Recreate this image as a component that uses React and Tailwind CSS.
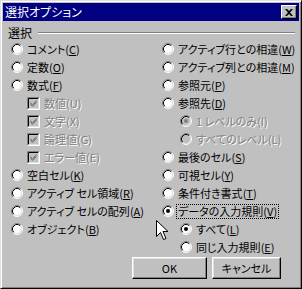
import React from "react";

function Radio({ checked, disabled }) {
  return (
    <svg width="12" height="12" viewBox="0 0 12 12" className="shrink-0">
      <circle cx="6" cy="6" r="5" fill={disabled ? "#c0c0c0" : "#ffffff"} />
      <path d="M2.11 9.89 A5.5 5.5 0 0 1 9.89 2.11" fill="none" stroke="#808080" />
      <path d="M9.89 2.11 A5.5 5.5 0 0 1 2.11 9.89" fill="none" stroke="#ffffff" />
      <path d="M2.82 9.18 A4.5 4.5 0 0 1 9.18 2.82" fill="none" stroke="#000000" />
      <path d="M9.18 2.82 A4.5 4.5 0 0 1 2.82 9.18" fill="none" stroke="#dfdfdf" />
      {checked && <circle cx="6" cy="6" r="2" fill={disabled ? "#808080" : "#000000"} />}
    </svg>
  );
}

function Check() {
  return (
    <svg width="13" height="13" viewBox="0 0 13 13" className="shrink-0">
      <rect x="0" y="0" width="13" height="13" fill="#c0c0c0" />
      <path d="M0.5 12.5 V0.5 H12.5" fill="none" stroke="#808080" />
      <path d="M1.5 11.5 V1.5 H11.5" fill="none" stroke="#000000" />
      <path d="M0.5 12.5 H12.5 V0.5" fill="none" stroke="#ffffff" />
      <path d="M1.5 11.5 H11.5 V1.5" fill="none" stroke="#dfdfdf" />
      <path d="M3.5 5.5 L5.5 7.5 L9.5 3.5 M3.5 6.5 L5.5 8.5 L9.5 4.5 M3.5 7.5 L5.5 9.5 L9.5 5.5" fill="none" stroke="#808080" />
    </svg>
  );
}

function Label({ t, k, disabled }) {
  if (disabled) {
    return (
      <span className="text-[#808080] [text-shadow:1px_1px_0_#ffffff]">
        {t}({k})
      </span>
    );
  }
  return (
    <span>
      {t}(<u className="underline-offset-[1px]">{k}</u>)
    </span>
  );
}

function Row({ t, k, check, radio, checked, disabled, indent, focus }) {
  return (
    <div className={`h-[18px] flex items-center ${indent}`}>
      {check ? <Check /> : <Radio checked={checked} disabled={disabled} />}
      <span
        className={`ml-[3px] leading-[13px] px-[1px] ${
          focus ? "outline-1 outline-dotted outline-black" : ""
        }`}
      >
        <Label t={t} k={k} disabled={disabled} />
      </span>
    </div>
  );
}

const left = [
  { t: "コメント", k: "C" },
  { t: "定数", k: "O" },
  { t: "数式", k: "F" },
  { t: "数値", k: "U", check: true, disabled: true, indent: "pl-[16px]" },
  { t: "文字", k: "X", check: true, disabled: true, indent: "pl-[16px]" },
  { t: "論理値", k: "G", check: true, disabled: true, indent: "pl-[16px]" },
  { t: "エラー値", k: "E", check: true, disabled: true, indent: "pl-[16px]" },
  { t: "空白セル", k: "K" },
  { t: "アクティブ セル領域", k: "R" },
  { t: "アクティブ セルの配列", k: "A" },
  { t: "オブジェクト", k: "B" },
];

const right = [
  { t: "アクティブ行との相違", k: "W" },
  { t: "アクティブ列との相違", k: "M" },
  { t: "参照元", k: "P" },
  { t: "参照先", k: "D" },
  { t: "1 レベルのみ", k: "I", disabled: true, checked: true, indent: "pl-[18px]" },
  { t: "すべてのレベル", k: "L", disabled: true, indent: "pl-[18px]" },
  { t: "最後のセル", k: "S" },
  { t: "可視セル", k: "Y" },
  { t: "条件付き書式", k: "T" },
  { t: "データの入力規則", k: "V", checked: true, focus: true },
  { t: "すべて", k: "L", checked: true, indent: "pl-[18px]" },
  { t: "同じ入力規則", k: "E", indent: "pl-[18px]" },
];

function Button({ children, w }) {
  return (
    <div
      className={`${w} h-[22px] flex items-center justify-center bg-[#c0c0c0] border border-t-white border-l-white border-r-black border-b-black shadow-[inset_-1px_-1px_#808080,inset_1px_1px_#dfdfdf]`}
    >
      {children}
    </div>
  );
}

export default function App() {
  return (
    <div className="relative w-[302px] h-[289px] bg-[#c0c0c0] p-[2px] border border-t-[#dfdfdf] border-l-[#dfdfdf] border-r-black border-b-black shadow-[inset_1px_1px_#ffffff,inset_-1px_-1px_#808080] text-[11px] text-black [font-family:'Noto_Sans_CJK_JP',sans-serif] [font-feature-settings:'palt'] overflow-hidden">
      {/* title bar */}
      <div className="h-[18px] bg-[#000080] flex items-center justify-between pl-[2px] pr-[2px]">
        <span className="text-white text-[12px] leading-[14px]">選択オプション</span>
        <div className="w-[16px] h-[14px] flex items-center justify-center bg-[#c0c0c0] border border-t-white border-l-white border-r-black border-b-black shadow-[inset_-1px_-1px_#808080]">
          <svg width="8" height="7" viewBox="0 0 8 7">
            <path d="M0 0 L2 0 L4 2 L6 0 L8 0 L5 3.5 L8 7 L6 7 L4 5 L2 7 L0 7 L3 3.5 Z" fill="#000000" />
          </svg>
        </div>
      </div>

      {/* group header */}
      <div className="mt-[5px] h-[14px] flex items-center pl-[5px] pr-[4px]">
        <span className="leading-[14px] text-[12px]">選択</span>
        <div className="flex-1 ml-[6px] h-[2px] border-t border-t-[#808080] border-b border-b-white" />
      </div>

      {/* options */}
      <div className="grid grid-cols-[151px_1fr]">
        <div className="pl-[8px]">
          {left.map((r, i) => (
            <Row key={i} {...r} />
          ))}
        </div>
        <div className="pl-[8px]">
          {right.map((r, i) => (
            <Row key={i} {...r} />
          ))}
        </div>
      </div>

      {/* buttons */}
      <div className="mt-[1px] flex gap-[5px] pl-[129px]">
        <Button w="w-[75px]">OK</Button>
        <Button w="w-[69px]">キャンセル</Button>
      </div>

      {/* mouse cursor */}
      <svg width="13" height="21" viewBox="0 0 13 21" className="absolute left-[155px] top-[219px]">
        <path d="M0.5 0.5 L0.5 16.5 L4.5 12.5 L7.5 19.5 L10 18.5 L7 11.5 L12 11.5 Z" fill="#ffffff" stroke="#000000" />
      </svg>
    </div>
  );
}
